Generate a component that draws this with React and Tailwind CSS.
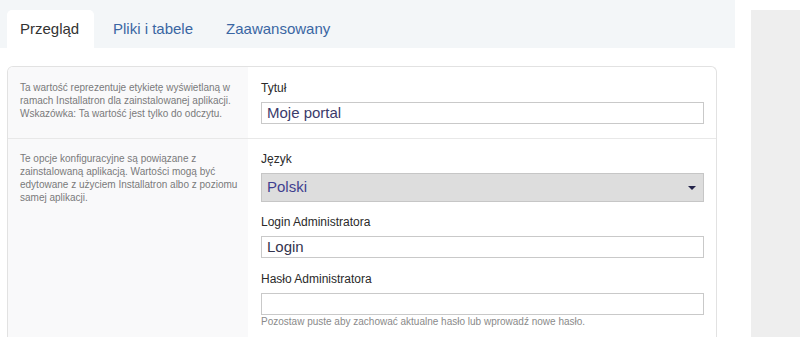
import React from 'react';

const tabs = [
  { label: 'Przegląd', active: true },
  { label: 'Pliki i tabele' },
  { label: 'Zaawansowany' },
];

function Label({ children }) {
  return <div className="text-[12px] leading-[14px] text-[#2a2a2a] mb-[7px]">{children}</div>;
}

function TextInput({ value, color = 'text-[#3b3b6b]' }) {
  return (
    <div className={`h-[22px] border border-[#c9c9c9] bg-white pl-[5px] flex items-center text-[15px] ${color}`}>
      {value}
    </div>
  );
}

export default function App() {
  return (
    <div
      className="w-[800px] h-[337px] overflow-hidden bg-white flex"
      style={{ fontFamily: '"Liberation Sans", Arial, sans-serif' }}
    >
      {/* main column */}
      <div className="w-[735px] flex flex-col">
        {/* tabs */}
        <div className="h-[48px] bg-[#f3f6f8] flex items-end pl-[7px]">
          {tabs.map((t) =>
            t.active ? (
              <div
                key={t.label}
                className="h-[38px] w-[87px] bg-white rounded-t-[5px] flex items-center pl-[13px] text-[15px] text-[#333]"
              >
                {t.label}
              </div>
            ) : (
              <div key={t.label} className="h-[38px] flex items-center ml-[19px] mr-[14px] text-[15px] text-[#3a66a3]">
                {t.label}
              </div>
            )
          )}
        </div>

        {/* settings card */}
        <div className="mt-[18px] ml-[7px] w-[710px] flex-1 border border-b-0 border-[#e2e2e2] rounded-t-[6px] overflow-hidden">
          {/* row: title */}
          <div className="flex border-b border-[#e8e8e8]">
            <div className="w-[240px] bg-[#f9f9fa] pl-[12px] pr-[6px] pt-[14px] pb-[10px] text-[10px] leading-[13px] text-[#7a7a7a]">
              Ta wartość reprezentuje etykietę wyświetlaną w ramach Installatron dla zainstalowanej aplikacji. Wskazówka: Ta wartość jest tylko do odczytu.
            </div>
            <div className="flex-1 pl-[13px] pr-[12px] pt-[14px] pb-[14px]">
              <Label>Tytuł</Label>
              <TextInput value="Moje portal" />
            </div>
          </div>

          {/* row: config */}
          <div className="flex h-full">
            <div className="w-[240px] bg-[#f9f9fa] pl-[12px] pr-[6px] pt-[13px] text-[10px] leading-[13px] text-[#7a7a7a]">
              Te opcje konfiguracyjne są powiązane z zainstalowaną aplikacją. Wartości mogą być edytowane z użyciem Installatron albo z poziomu samej aplikacji.
            </div>
            <div className="flex-1 pl-[13px] pr-[12px] pt-[13px]">
              <Label>Język</Label>
              <div className="h-[29px] border border-[#c6c6c6] bg-[#dddddd] pl-[5px] pr-[7px] flex items-center justify-between text-[15px] text-[#3f3f8f]">
                <span>Polski</span>
                <svg width="8" height="4" viewBox="0 0 8 4">
                  <path d="M0 0h8L4 4z" fill="#24244a" />
                </svg>
              </div>

              <div className="mt-[13px]">
                <Label>Login Administratora</Label>
                <TextInput value="Login" color="text-[#34344e]" />
              </div>

              <div className="mt-[14px]">
                <Label>Hasło Administratora</Label>
                <TextInput value="" />
                <div className="mt-[1px] text-[10px] leading-[12px] text-[#8a8a8a]">
                  Pozostaw puste aby zachować aktualne hasło lub wprowadź nowe hasło.
                </div>
              </div>
            </div>
          </div>
        </div>
      </div>

      {/* right gutter */}
      <div className="ml-[16px] mt-[10px] flex-1 bg-[#eeeeee]" />
    </div>
  );
}
